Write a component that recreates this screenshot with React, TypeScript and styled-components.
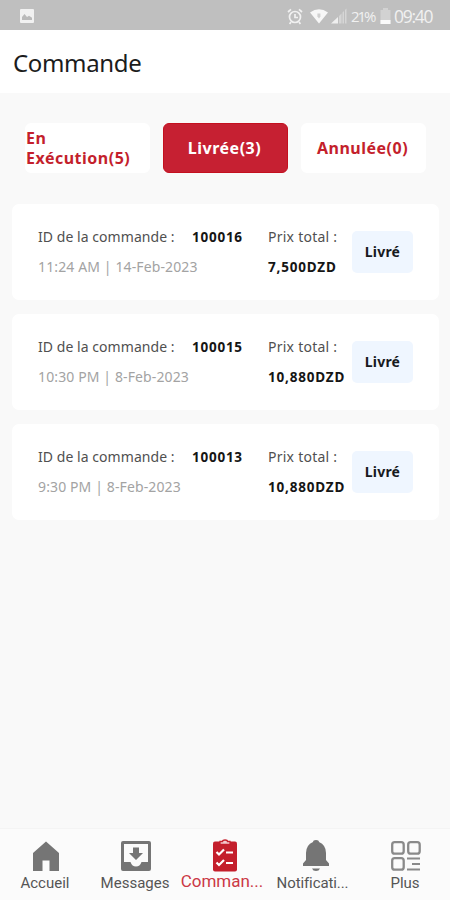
import React from "react";
import styled, { createGlobalStyle } from "styled-components";

const Global = createGlobalStyle`
  * { box-sizing: border-box; }
  body { margin: 0; background: #f9f9f9; font-family: "Noto Sans", sans-serif; }
`;

const Screen = styled.div`
  width: 450px;
  height: 900px;
  display: flex;
  flex-direction: column;
  background: #f9f9f9;
  overflow: hidden;
`;

const StatusBar = styled.div`
  height: 30px;
  flex: none;
  display: flex;
  align-items: center;
  padding: 2px 18px 0 19px;
  background: #bfbfbf;
  color: #f1f1f1;
  svg { display: block; flex: none; }
`;

const StatusIcons = styled.div`
  margin-left: auto;
  display: flex;
  align-items: center;
`;

const Gap = styled.i<{ $w: number }>`
  width: ${(p) => p.$w}px;
`;

const StatusText = styled.span<{ $size: number; $width: number; $spacing: number }>`
  font-family: "Open Sans", sans-serif;
  font-size: ${(p) => p.$size}px;
  letter-spacing: ${(p) => p.$spacing}px;
  width: ${(p) => p.$width}px;
  line-height: 20px;
  white-space: nowrap;
`;

const Header = styled.header`
  height: 63px;
  flex: none;
  padding: 14px 13px 0;
  background: #fff;
`;

const Title = styled.h1`
  margin: 0;
  font-size: 24px;
  font-weight: 400;
  line-height: 38px;
  letter-spacing: -0.35px;
  color: #1c1c1c;
`;

const Tabs = styled.div`
  flex: none;
  display: flex;
  gap: 13px;
  padding: 30px 24px 0 25px;
`;

const Tab = styled.button<{ $active?: boolean; $align?: "start" | "center" }>`
  flex: none;
  width: 125px;
  height: 50px;
  padding: 0 ${(p) => (p.$align === "start" ? 0 : 2)}px 0 ${(p) => (p.$align === "start" ? 1 : 0)}px;
  border: ${(p) => (p.$active ? "1px solid #c4101f" : "0")};
  border-radius: 6px;
  display: flex;
  align-items: center;
  justify-content: ${(p) => (p.$align === "start" ? "flex-start" : "center")};
  text-align: left;
  background: ${(p) => (p.$active ? "#c62032" : "#fff")};
  color: ${(p) => (p.$active ? "#fff" : "#c41f2c")};
  font-family: inherit;
  font-size: 16px;
  font-weight: 700;
  line-height: 20px;
  letter-spacing: 0.5px;
`;

const Orders = styled.main`
  flex: 1;
  display: flex;
  flex-direction: column;
  gap: 14px;
  padding: 31px 11px 0 12px;
`;

const Card = styled.article`
  height: 96px;
  display: grid;
  grid-template-columns: 154px 76px 84px 61px;
  align-items: center;
  padding-left: 26px;
  border-radius: 7px;
  background: #fff;
`;

const Stack = styled.div`
  align-self: start;
  padding-top: 19px;
  display: flex;
  flex-direction: column;
  gap: 2px;
`;

const Line = styled.span<{ $tone: "label" | "muted" | "strong"; $spacing: number }>`
  height: 28px;
  line-height: 28px;
  white-space: nowrap;
  font-size: ${(p) => (p.$tone === "strong" ? 13.5 : 14)}px;
  font-weight: ${(p) => (p.$tone === "strong" ? 700 : 400)};
  color: ${(p) => ({ label: "#505050", muted: "#a3a3a3", strong: "#151515" })[p.$tone]};
  letter-spacing: ${(p) => p.$spacing}px;
`;

const Badge = styled.div`
  height: 42px;
  padding-bottom: 2px;
  border-radius: 5px;
  display: flex;
  align-items: center;
  justify-content: center;
  background: #eff6ff;
  color: #171a1e;
  font-size: 14px;
  font-weight: 700;
  letter-spacing: 0.2px;
`;

const Nav = styled.nav`
  height: 72px;
  flex: none;
  display: grid;
  grid-template-columns: repeat(5, 90px);
  background: #fbfbfb;
  border-top: 1px solid #f4f4f4;
`;

const NavItem = styled.a<{ $active?: boolean; $spacing: number; $inset: number }>`
  display: flex;
  flex-direction: column;
  align-items: center;
  padding-top: 9px;
  color: ${(p) => (p.$active ? "#c41f2c" : "#757575")};
  svg {
    display: block;
    flex: none;
    margin-left: ${(p) => (p.$active ? 0 : 2)}px;
  }
  span {
    font-family: Roboto, sans-serif;
    font-size: ${(p) => (p.$active ? 17 : 15)}px;
    letter-spacing: ${(p) => p.$spacing}px;
    line-height: 20px;
    margin-top: ${(p) => (p.$active ? -1 : 1)}px;
    margin-right: ${(p) => p.$inset}px;
    color: ${(p) => (p.$active ? "#cb3845" : "#555")};
    white-space: nowrap;
  }
`;

const PictureIcon = () => (
  <svg width="16" height="16" viewBox="0 0 16 16">
    <rect x="1" y="1" width="14" height="14" rx="1" fill="#f1f1f1" />
    <path d="M3 12V9l2.5-3 2.5 3 2-1.3 3 2V12z" fill="#bababa" />
  </svg>
);

const AlarmIcon = () => (
  <svg width="16" height="17" viewBox="0 0 16 17" fill="none" stroke="#f1f1f1" strokeWidth="1.7">
    <circle cx="8" cy="9" r="5.5" />
    <path d="M8 6v3.500h3M1 4l3-2.700M15 4l-3-2.700M4 14l-1.400 2M12 14l1.400 2" />
  </svg>
);

const WifiIcon = () => (
  <svg width="18" height="15" viewBox="0 0 18 15">
    <path d="M0 3.500Q9-2.800 18 3.500L9 14.500z" fill="#f7f7f7" />
    <path d="M7.400 4.500h3v3l-1.400 2-1.600-2z" fill="#d0d0d0" />
  </svg>
);

const SignalIcon = () => (
  <svg width="16" height="16" viewBox="0 0 16 16">
    <path d="M0 15.500 7 9v6.500z" fill="#efefef" />
    <path d="M8 15.500V8l2.500-2.500v10zM11.500 15.500v-11L13 3v12.500zM14 15.500V2l1.500-1.500v15z" fill="#d6d6d6" />
  </svg>
);

const BatteryIcon = () => (
  <svg width="11" height="16" viewBox="0 0 11 16">
    <path d="M3 0h5v2h2.500v14H.5V2H3z" fill="#d2d2d2" />
    <path d="M.5 12h10v4H.5z" fill="#fafafa" />
  </svg>
);

const HomeIcon = () => (
  <svg width="28" height="34" viewBox="0 0 28 34">
    <path d="M14 3.500 1 15v18h9.500V22.500h7V33H27V15z" fill="currentColor" />
  </svg>
);

const InboxIcon = () => (
  <svg width="32" height="34" viewBox="0 0 32 34">
    <path
      fillRule="evenodd"
      fill="currentColor"
      d="M3 3h26q2 0 2 2v26q0 2-2 2H3q-2 0-2-2V5q0-2 2-2zm1 3v18h6.500q1.500 4.500 5.500 4.500t5.500-4.500H28V6z"
    />
    <path d="M13 9.500h6v5.500h4L16 22l-7-7h4z" fill="currentColor" />
  </svg>
);

const ClipboardIcon = () => (
  <svg width="26" height="34" viewBox="0 0 26 34">
    <rect x="1" y="3.500" width="24" height="30" rx="2" fill="currentColor" />
    <path d="M8 6.500V3.500h2.500q0-1.500 2.500-1.500t2.500 1.500H18v3z" fill="#f3c9ce" stroke="currentColor" strokeWidth="1.300" />
    <path d="m4.500 14 2.500 2.500 5-5M14 14.500h7M4.500 24.500 7 27l5-5M14 25h7" fill="none" stroke="#fff" strokeWidth="2.200" />
  </svg>
);

const BellIcon = () => (
  <svg width="28" height="34" viewBox="0 0 28 34">
    <path
      fill="currentColor"
      d="M11 4q0-2 3-2t3 2Q24 7 24 15v7l3 3.500V28H1v-2.500L4 22v-7Q4 7 11 4zM10 30.500h8q-1 2.500-4 2.500t-4-2.500z"
    />
  </svg>
);

const GridIcon = () => (
  <svg width="32" height="34" viewBox="0 0 32 34" fill="none" stroke="#8a8a8a" strokeWidth="2.300">
    <rect x="2.200" y="4.200" width="11.500" height="11.500" rx="2.500" />
    <rect x="18.200" y="4.200" width="11.500" height="11.500" rx="2.500" />
    <rect x="2.200" y="20.200" width="11.500" height="11.500" rx="2.500" />
    <path d="M17 20.500h13M22 26h8M17 31.500h13" strokeWidth="2" />
  </svg>
);

const orders = [
  { id: "100016", time: "11:24 AM | 14-Feb-2023", price: "7,500DZD" },
  { id: "100015", time: "10:30 PM | 8-Feb-2023", price: "10,880DZD" },
  { id: "100013", time: "9:30 PM | 8-Feb-2023", price: "10,880DZD" },
];

const navItems = [
  { label: "Accueil", icon: <HomeIcon />, spacing: 0, inset: 0 },
  { label: "Messages", icon: <InboxIcon />, spacing: 0, inset: 0 },
  { label: "Comman...", icon: <ClipboardIcon />, spacing: 0, inset: 6, active: true },
  { label: "Notificati...", icon: <BellIcon />, spacing: -0.1, inset: 5 },
  { label: "Plus", icon: <GridIcon />, spacing: 0, inset: 0 },
];

export default function App() {
  return (
    <Screen>
      <Global />
      <StatusBar>
        <PictureIcon />
        <StatusIcons>
          <AlarmIcon />
          <Gap $w={7} />
          <WifiIcon />
          <Gap $w={3} />
          <SignalIcon />
          <Gap $w={4} />
          <StatusText $size={15} $width={23} $spacing={-2.1}>21%</StatusText>
          <Gap $w={6} />
          <BatteryIcon />
          <Gap $w={3} />
          <StatusText $size={17.5} $width={38} $spacing={-1.3}>09:40</StatusText>
        </StatusIcons>
      </StatusBar>
      <Header>
        <Title>Commande</Title>
      </Header>
      <Tabs>
        <Tab $align="start">En<br />Exécution(5)</Tab>
        <Tab $active>Livrée(3)</Tab>
        <Tab>Annulée(0)</Tab>
      </Tabs>
      <Orders>
        {orders.map((o) => (
          <Card key={o.id}>
            <Stack>
              <Line $tone="label" $spacing={0.05}>ID de la commande :</Line>
              <Line $tone="muted" $spacing={0.12}>{o.time}</Line>
            </Stack>
            <Stack>
              <Line $tone="strong" $spacing={0.75}>{o.id}</Line>
            </Stack>
            <Stack>
              <Line $tone="label" $spacing={0.25}>Prix total :</Line>
              <Line $tone="strong" $spacing={0.8}>{o.price}</Line>
            </Stack>
            <Badge>Livré</Badge>
          </Card>
        ))}
      </Orders>
      <Nav>
        {navItems.map((n) => (
          <NavItem key={n.label} $active={n.active} $spacing={n.spacing} $inset={n.inset}>
            {n.icon}
            <span>{n.label}</span>
          </NavItem>
        ))}
      </Nav>
    </Screen>
  );
}
